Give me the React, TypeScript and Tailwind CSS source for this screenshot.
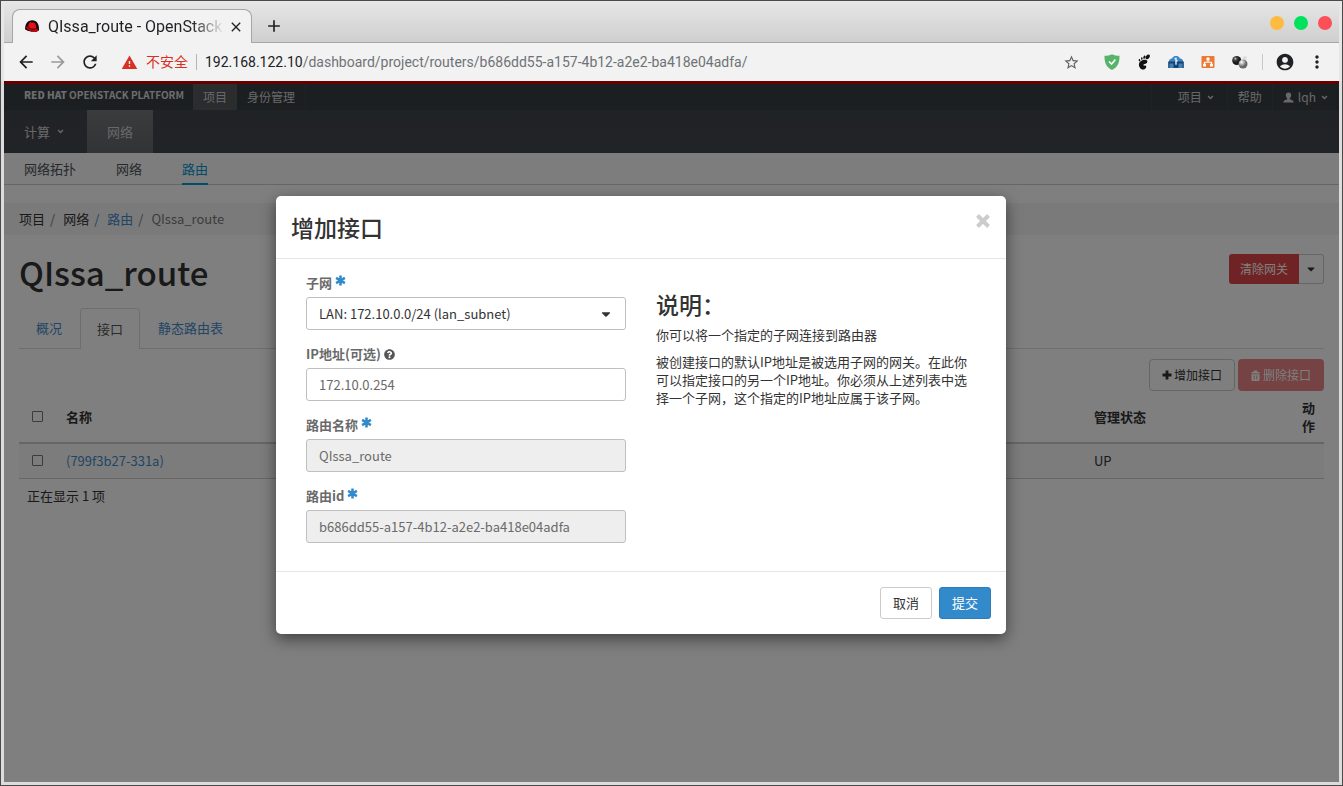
import React from 'react'
import { FaAngleDown, FaCaretDown, FaQuestionCircle } from 'react-icons/fa'
import { MdAccountCircle, MdArrowBack, MdArrowForward, MdClose, MdMoreVert, MdRefresh, MdStarBorder, MdWarning, MdAdd } from 'react-icons/md'
import { clsx } from 'clsx'

const pageFont = "font-['Noto_Sans_CJK_SC',sans-serif]"
const chromeFont = "font-[Roboto,'Noto_Sans_CJK_SC',sans-serif]"

function RedHatLogo() {
  return (
    <svg viewBox="0 0 16 16" className="size-4 shrink-0">
      <path d="M1.2 11.6C.6 5 3.500 1.300 8.200 1.300c4.600 0 7.300 4 6.800 10.300-3 1.600-10.500 1.700-13.800 0z" fill="#17090b" />
      <path d="M4.200 7.400c.3-2.600 1-4.300 2.400-4.200.9.100 1.200.5 2 .3 1.500-.4 2.700.6 3.200 2.500l.6 2.700c-1 1.900-6.900 1.300-8.200-1.300z" fill="#e3101c" />
      <path d="M2 8.300c.5-.7 1.200-.9 1.700-.8 1.300 3 7.200 4.300 9.300 2 1.500.8 1.700 2.100.4 2.900-3.600 1.700-10.600-1.200-11.400-4.100z" fill="#c4000e" />
      <path d="M.8 10.200c1.900 1.300 3.700 1.900 6 2.200l-.6 2.600H.8z" fill="#f1f1f1" />
    </svg>
  )
}

function ShieldIcon() {
  return (
    <svg viewBox="0 0 16 16" className="size-4">
      <path d="M8 .2c2.400 1.100 4.800 1.500 7.500 1.600C15.600 8.500 14 13 8 16 2 13 .4 8.500.5 1.800 3.200 1.700 5.600 1.300 8 .2z" fill="#57b36a" />
      <path d="M5 7.400l2.600 2.700L11.400 5.600" fill="none" stroke="#fff" strokeWidth="1.500" />
    </svg>
  )
}

function FootIcon() {
  return (
    <svg viewBox="0 0 16 16" className="size-4" fill="#111">
      <path d="M9.500 5.800c2.600.6 2.300 3.400.2 3.900-1.700.4-3.100.8-2 1.800.6.500 1.200-.4 2.100.2 1.300 1-.2 3.700-2.600 3.800C4.400 15.600 2.500 12.300 3 9.700c.4-2.500 4-4.400 6.500-3.900z" />
      <ellipse cx="11.700" cy="2.900" rx="1.700" ry="2.600" transform="rotate(38 11.700 2.900)" />
      <ellipse cx="8.400" cy="3.200" rx="1" ry="1.700" transform="rotate(25 8.400 3.200)" />
      <ellipse cx="5.800" cy="4.500" rx=".8" ry="1.300" />
      <ellipse cx="3.500" cy="6.200" rx=".8" ry="1.200" transform="rotate(-15 3.500 6.200)" />
    </svg>
  )
}

function BackpackIcon() {
  return (
    <svg viewBox="0 0 16 16" className="size-4">
      <path d="M1 6.500C2 5 3 4.500 4 4.500 5 2.600 6.300 2 8 2s3 .6 4 2.500c1 0 2.200.5 3 2V8H1z" fill="#3b86c8" />
      <path d="M.2 7.500h15.600V14H.2z" fill="#1a4270" />
      <path d="M1.500 9.500h4V14h-4zM10.500 9.500h4V14h-4z" fill="#3f83bd" />
      <path d="M6.600 4.500H8v6.300M8 6.800h1.500" stroke="#e7f3ff" strokeWidth="1.400" fill="none" />
    </svg>
  )
}

function SitemapIcon() {
  return (
    <svg viewBox="0 0 16 16" className="size-4">
      <rect x="1.500" y="2" width="13" height="12" rx="1" fill="#ec7a33" />
      <path d="M8 5.500v3.300M4.500 10.500V8.300h7v2.200" stroke="#fff" strokeWidth="1.100" fill="none" />
      <path d="M6.500 3.500h3v3h-3zM3 9.700h3v2.800H3zM10 9.700h3v2.800h-3z" fill="#fff" />
    </svg>
  )
}

function SpheresIcon() {
  return (
    <svg viewBox="0 0 16 16" className="size-4">
      <defs>
        <radialGradient id="dark" cx=".35" cy=".3"><stop offset="0" stopColor="#ddd" /><stop offset=".35" stopColor="#444" /><stop offset="1" stopColor="#151515" /></radialGradient>
        <radialGradient id="light" cx=".35" cy=".3"><stop offset="0" stopColor="#fff" /><stop offset="1" stopColor="#666" /></radialGradient>
      </defs>
      <circle cx="13" cy="4" r="2" fill="#ddd" />
      <circle cx="4.700" cy="6.500" r="4.500" fill="url(#dark)" />
      <circle cx="11" cy="10" r="4.500" fill="url(#light)" />
    </svg>
  )
}

function TrashIcon() {
  return (
    <svg viewBox="0 0 10 12" className="h-[11px] w-[9px]" fill="currentColor" fillRule="evenodd">
      <path d="M3 .5h4V2h2.500v1.700H.5V2H3zM.5 4.500h9V11q0 1-1 1h-7q-1 0-1-1zM3 6v4.500h1V6zm3 0v4.500h1V6z" />
    </svg>
  )
}

function PlusIcon() {
  return (
    <svg viewBox="0 0 10 10" className="size-[10px]" fill="none" stroke="currentColor" strokeWidth="2.800">
      <path d="M5 .5v9M.5 5h9" />
    </svg>
  )
}

function UserIcon() {
  return (
    <svg viewBox="0 0 12 12" className="size-[11px]" fill="currentColor">
      <path d="M6 .5c2 0 3 1.300 2.900 3C8.800 5 8.200 6.200 7.400 6.800v1c1.700.7 4.200 1.200 4.300 3.700H.3C.4 9 2.900 8.500 4.600 7.800v-1C3.800 6.200 3.200 5 3.100 3.500 3 1.800 4 .5 6 .5z" />
    </svg>
  )
}

function BrowserBar() {
  return (
    <header className={clsx(chromeFont, 'text-[#202124]')}>
      <div className="flex h-[42px] items-end border-b border-[#a6a6a6] bg-linear-to-b from-[#e6e6e6] to-[#cfcfcf] pl-2">
        <div className="-mb-px flex h-[34px] w-60 items-center rounded-t-lg border border-b-0 border-[#a6a6a6] bg-[#f2f2f2] pl-[11px] pr-[7px]">
          <RedHatLogo />
          <span className="ml-2 w-[180px] shrink-0 whitespace-nowrap bg-linear-to-r from-[#202124] from-80% to-transparent to-98% bg-clip-text text-base text-transparent">QIssa_route - OpenStack</span>
          <button aria-label="Close tab"><MdClose className="size-4" /></button>
        </div>
        <button aria-label="New tab" className="mb-1.5 ml-3"><MdAdd className="size-5" /></button>
        <div className="mb-3 ml-auto mr-[7px] flex gap-[10px]">
          <button aria-label="Minimize" className="size-[14px] rounded-full bg-[#fdbc40]" />
          <button aria-label="Maximize" className="size-[14px] rounded-full bg-[#00e25b]" />
          <button aria-label="Close" className="size-[14px] rounded-full bg-[#fc4f57]" />
        </div>
      </div>
      <div className="flex h-[38px] items-center bg-[#f2f2f2] px-3">
        <div className="flex items-center gap-3">
          <button aria-label="Back"><MdArrowBack className="size-5" /></button>
          <button aria-label="Forward" className="text-[#9a9a9a]"><MdArrowForward className="size-5" /></button>
          <button aria-label="Reload"><MdRefresh className="size-5" /></button>
        </div>
        <MdWarning className="ml-[21px] size-[17px] text-[#d93025]" />
        <span className="ml-2 text-sm text-[#d93025]">不安全</span>
        <span className="mx-2 h-4 w-px bg-[#b5b5b5]" />
        <span className="text-sm">192.168.122.10<span className="text-[#6f7276]">/dashboard/project/routers/b686dd55-a157-4b12-a2e2-ba418e04adfa/</span></span>
        <div className="ml-auto flex items-center gap-4">
          <button aria-label="Bookmark" className="mr-2 text-[#5f6368]"><MdStarBorder className="size-[17px]" /></button>
          <ShieldIcon />
          <FootIcon />
          <BackpackIcon />
          <SitemapIcon />
          <SpheresIcon />
        </div>
        <span className="ml-[14px] mr-3 h-4 w-px bg-[#c8c8c8]" />
        <button aria-label="Profile"><MdAccountCircle className="size-5" /></button>
        <button aria-label="Menu" className="ml-3"><MdMoreVert className="size-5" /></button>
      </div>
    </header>
  )
}

function Navigation() {
  return (
    <nav>
      <div className="flex h-[29px] border-t-[3px] border-[#cc0000] bg-[#393f45] text-xs text-[#d1d1d1]">
        <a href="#home" className="ml-5 mr-[9px] self-start pt-[3px] text-[10px] leading-4 text-[#dadada]"><b className="font-black">RED HAT</b> <span className="font-bold">OPENSTACK PLATFORM</span></a>
        <a href="#project" className="flex items-center bg-[#54585d] px-[10px]">项目</a>
        <a href="#identity" className="flex items-center border-r border-[#41464b] px-[10px]">身份管理</a>
        <div className="ml-auto flex">
          <button className="flex items-center gap-1 border-l border-[#41464b] pl-[26px] pr-3">项目 <FaAngleDown className="size-[9px]" /></button>
          <button className="flex items-center border-l border-[#41464b] px-[10px]">帮助</button>
          <button className="flex items-center gap-1 border-l border-[#41464b] px-[10px]"><UserIcon /> lqh <FaAngleDown className="size-[9px]" /></button>
        </div>
      </div>
      <div className="flex h-[43px] bg-linear-to-b from-[#41464b] to-[#43484d] text-[13px] text-[#d1d1d1]">
        <button className="flex items-center gap-1.5 pl-5 pr-[22px]">计算 <FaAngleDown className="size-[9px]" /></button>
        <a href="#network" className="flex items-center bg-linear-to-b from-[#74777b] to-[#64686c] px-5">网络</a>
      </div>
      <div className="flex h-8 gap-10 border-b border-[#cccccc] bg-[#fafafa] px-5 text-[13px] text-[#4d5258]">
        <a href="#topology" className="flex items-center">网络拓扑</a>
        <a href="#networks" className="flex items-center">网络</a>
        <a href="#routers" className="-mb-px flex items-center border-y-2 border-b-[#0099d3] border-t-transparent text-[#0099d3]">路由</a>
      </div>
    </nav>
  )
}

function RouterPage() {
  return (
    <main className="text-[13px] leading-[18px] text-[#333333]">
      <nav aria-label="Breadcrumb" className="mt-[18px] flex h-8 items-center bg-[#f5f5f5] px-[15px]">
        <span>项目</span><span className="mx-[5px] mr-2 text-[#777777]">/</span>
        <span>网络</span><span className="mx-[5px] mr-2 text-[#428bca]">/</span>
        <a href="#routers" className="text-[#428bca]">路由</a><span className="mx-[5px] mr-2 text-[#777777]">/</span>
        <span className="text-[#777777]">QIssa_route</span>
      </nav>
      <div className="px-[15px]">
        <div className="flex h-[73px] items-center justify-between">
          <h1 className="text-[33px] font-medium leading-10">QIssa_route</h1>
          <div className="mb-1.5 flex h-[30px] text-xs">
            <button className="rounded-l-[3px] bg-[#e04648] px-[11px] text-white">清除网关</button>
            <button aria-label="More actions" className="rounded-r-[3px] border border-l-0 border-[#cccccc] px-1.5"><FaCaretDown className="size-3" /></button>
          </div>
        </div>
        <div className="flex h-[41px] gap-0.5 border-b border-[#dddddd]">
          <button className="pl-[17px] pr-4 text-[#428bca]">概况</button>
          <button className="-mb-px rounded-t border border-b-0 border-[#dddddd] bg-white px-4 text-[#555555]">接口</button>
          <button className="px-4 text-[#428bca]">静态路由表</button>
        </div>
        <div className="mt-[10px] flex justify-end gap-[3px] text-xs">
          <button className="flex h-8 items-center gap-0.5 rounded border border-[#cccccc] px-3"><PlusIcon />增加接口</button>
          <button disabled className="flex h-8 items-center gap-[3px] rounded bg-[#e04648] px-[13px] text-white opacity-65"><TrashIcon />删除接口</button>
        </div>
        <table className="w-full table-fixed text-left">
          <thead>
            <tr className="h-[52px] border-b-2 border-[#cccccc]">
              <th className="w-[39px] pl-[13px]"><input type="checkbox" aria-label="全选" className="block size-[11px] appearance-none rounded-[1px] border border-[#777777]" /></th>
              <th className="px-2">名称</th>
              <th className="w-[208px] px-2">管理状态</th>
              <th className="w-[30px] pl-2 pr-[9px]">动作</th>
            </tr>
          </thead>
          <tbody>
            <tr className="h-[35px] border-b border-[#cccccc] bg-[#f9f9f9]">
              <td className="pl-[13px]"><input type="checkbox" aria-label="选择" className="block size-[11px] appearance-none rounded-[1px] border border-[#777777]" /></td>
              <td className="px-2"><a href="#port" className="text-[#428bca]">(799f3b27-331a)</a></td>
              <td className="px-2">UP</td>
              <td />
            </tr>
          </tbody>
          <tfoot>
            <tr><td colSpan={4} className="p-2">正在显示 1 项</td></tr>
          </tfoot>
        </table>
      </div>
    </main>
  )
}

function RequiredMark() {
  return (
    <svg viewBox="0 0 12 12" className="mb-1.5 ml-[3px] size-[11px] text-[#338acb]" fill="none" stroke="currentColor" strokeWidth="2.800">
      <path d="M6 .5v11M1.200 3.200l9.600 5.600M10.800 3.200L1.200 8.800" />
    </svg>
  )
}

interface FieldProps {
  id: string;
  label: string;
  mark: React.ReactNode;
  children: React.ReactNode;
}

function Field({ id, label, mark, children }: FieldProps) {
  return (
    <div className="mb-[15px]">
      <label htmlFor={id} className="mb-[5px] flex h-[18px] items-center font-bold text-[#6a6a6a]">{label}{mark}</label>
      {children}
    </div>
  )
}

const inputStyle = 'block h-[33px] w-full rounded-[3px] border border-[#bfbfbf] px-3 text-[13px]'

function AddInterfaceModal() {
  return (
    <div className="absolute inset-0 flex items-start justify-center bg-black/50 pr-[61px] pt-[115px]">
      <div role="dialog" aria-labelledby="modal-title" className="w-[730px] rounded-[5px] bg-white text-[13px] leading-[18px] text-[#333333] shadow-[0_5px_15px_rgba(0,0,0,0.5)]">
        <div className="flex h-[63px] items-center justify-between border-b border-[#e5e5e5] px-[15px]">
          <h3 id="modal-title" className="text-[23px] font-medium">增加接口</h3>
          <button aria-label="关闭" className="mb-3 text-[#cccccc]">
            <svg viewBox="0 0 16 16" className="size-4" fill="none" stroke="currentColor" strokeWidth="4">
              <path d="M2.500 2.500l11 11M13.500 2.500l-11 11" />
            </svg>
          </button>
        </div>
        <div className="flex px-[30px] pb-[13px] pt-[15px]">
          <form className="w-80">
            <Field id="subnet" label="子网" mark={<RequiredMark />}>
              <div className="relative">
                <select id="subnet" className={clsx(inputStyle, 'appearance-none bg-white')}>
                  <option>LAN: 172.10.0.0/24 (lan_subnet)</option>
                </select>
                <FaCaretDown className="pointer-events-none absolute right-[13px] top-[10px] size-[14px]" />
              </div>
            </Field>
            <Field id="ip" label="IP地址(可选)" mark={<FaQuestionCircle className="ml-[3px] size-[11px] text-[#555555]" />}>
              <input id="ip" defaultValue="172.10.0.254" className={clsx(inputStyle, 'text-[#6a6a6a]')} />
            </Field>
            <Field id="name" label="路由名称" mark={<RequiredMark />}>
              <input id="name" readOnly value="QIssa_route" className={clsx(inputStyle, 'bg-[#eeeeee] text-[#6a6a6a]')} />
            </Field>
            <Field id="router-id" label="路由id" mark={<RequiredMark />}>
              <input id="router-id" readOnly value="b686dd55-a157-4b12-a2e2-ba418e04adfa" className={clsx(inputStyle, 'bg-[#eeeeee] text-[#6a6a6a]')} />
            </Field>
          </form>
          <div className="ml-[30px] w-[315px] pt-[17px]">
            <h3 className="mb-[9px] text-[23px] font-medium leading-[26px]">说明：</h3>
            <p className="mb-[9px]">你可以将一个指定的子网连接到路由器</p>
            <p>被创建接口的默认IP地址是被选用子网的网关。在此你可以指定接口的另一个IP地址。你必须从上述列表中选择一个子网，这个指定的IP地址应属于该子网。</p>
          </div>
        </div>
        <div className="flex justify-end gap-[7px] border-t border-[#e5e5e5] p-[15px]">
          <button className="h-8 rounded-[3px] border border-[#cccccc] px-3">取消</button>
          <button className="h-8 rounded-[3px] border border-[#2d7dba] bg-[#338acb] px-3 text-white">提交</button>
        </div>
      </div>
    </div>
  )
}

export default function App() {
  return (
    <div className="flex min-h-screen flex-col border border-[#4a4a4a] bg-[#dcdcdc] px-[3px] pb-[3px]">
      <div className="-mx-[3px] bg-[#e6e6e6] px-[3px]">
        <BrowserBar />
      </div>
      <div className={clsx(pageFont, 'relative flex-1 bg-white')}>
        <Navigation />
        <RouterPage />
        <AddInterfaceModal />
      </div>
    </div>
  )
}
